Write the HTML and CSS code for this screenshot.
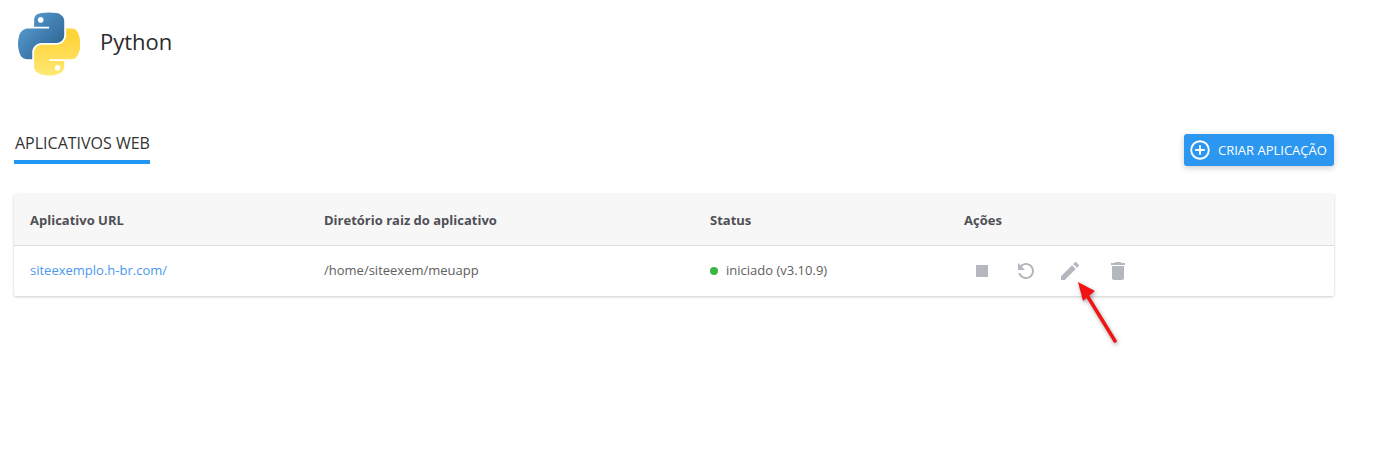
FILE: index.html
```html
<!DOCTYPE html>
<html lang="pt">
<head>
<meta charset="utf-8">
<title>Python</title>
<link rel="stylesheet" href="styles.css">
</head>
<body>
<main class="page">
  <header class="app-head">
    <svg class="logo" viewBox="0 0 110.4 112.2" aria-hidden="true">
      <defs>
        <linearGradient id="pyBlue" x1="0.1" y1="0.05" x2="0.85" y2="0.75">
          <stop offset="0" stop-color="#5a9fd4"/>
          <stop offset="1" stop-color="#306998"/>
        </linearGradient>
        <linearGradient id="pyYellow" x1="0.5" y1="0.2" x2="0.5" y2="1">
          <stop offset="0" stop-color="#ffd43b"/>
          <stop offset="1" stop-color="#ffe873"/>
        </linearGradient>
      </defs>
      <path fill="url(#pyBlue)" d="M54.92 0C50.34.02 45.96.41 42.11 1.09 30.76 3.1 28.7 7.29 28.7 15.03v10.22h26.81v3.41H18.64C10.85 28.66 4.02 33.34 1.89 42.25c-2.46 10.21-2.57 16.59 0 27.25 1.91 7.94 6.46 13.59 14.25 13.59h9.22V70.84c0-8.85 7.66-16.66 16.75-16.66h26.78c7.45 0 13.4-6.14 13.4-13.62V15.03c0-7.27-6.13-12.72-13.4-13.94C64.28.33 59.5-.02 54.92 0zM40.42 8.22c2.77 0 5.03 2.3 5.03 5.12 0 2.82-2.26 5.1-5.03 5.1-2.78 0-5.03-2.28-5.03-5.1 0-2.82 2.25-5.12 5.03-5.12z"/>
      <path fill="url(#pyYellow)" d="M85.64 28.66v11.9c0 9.23-7.83 17-16.75 17H42.11c-7.34 0-13.41 6.28-13.41 13.63v25.53c0 7.27 6.32 11.54 13.41 13.62 8.49 2.5 16.63 2.95 26.78 0 6.75-1.95 13.4-5.89 13.4-13.62V86.5H55.51v-3.41h40.13c7.79 0 10.7-5.44 13.41-13.59 2.8-8.4 2.68-16.47 0-27.25-1.93-7.76-5.6-13.59-13.41-13.59zM70.58 93.31c2.78 0 5.03 2.28 5.03 5.1 0 2.82-2.25 5.12-5.03 5.12-2.77 0-5.03-2.3-5.03-5.12 0-2.82 2.26-5.1 5.03-5.1z"/>
    </svg>
    <h1 class="app-title">Python</h1>
  </header>

  <section class="toolbar">
    <h2 class="tab">APLICATIVOS WEB</h2>
    <button class="create-btn" type="button">
      <svg class="create-icon" viewBox="0 0 20 20" aria-hidden="true">
        <circle cx="10" cy="10" r="8.8"/>
        <path d="M10 5.2v9.6M5.2 10h9.6"/>
      </svg>
      CRIAR APLICAÇÃO
    </button>
  </section>

  <section class="card">
    <div class="row row-head">
      <div>Aplicativo URL</div>
      <div>Diretório raiz do aplicativo</div>
      <div>Status</div>
      <div>Ações</div>
    </div>
    <div class="row row-body">
      <div class="cell-text"><a class="app-link" href="#">siteexemplo.h-br.com/</a></div>
      <div class="cell-text">/home/siteexem/meuapp</div>
      <div class="status cell-text"><span class="dot"></span>iniciado (v3.10.9)</div>
      <div class="actions">
        <svg class="act" viewBox="0 0 24 24" aria-hidden="true"><path d="M6 6h12v12H6z"/></svg>
        <svg class="act" viewBox="0 0 24 24" aria-hidden="true"><path transform="matrix(-1 0 0 1 24 0)" d="M17.65 6.35C16.2 4.9 14.21 4 12 4c-4.42 0-7.99 3.58-7.99 8s3.57 8 7.99 8c3.73 0 6.84-2.55 7.73-6h-2.08c-.82 2.33-3.04 4-5.65 4-3.31 0-6-2.69-6-6s2.69-6 6-6c1.66 0 3.14.69 4.22 1.78L13 11h7V4l-2.35 2.35z"/></svg>
        <svg class="act" viewBox="0 0 24 24" aria-hidden="true"><path d="M3 17.25V21h3.75L17.81 9.94l-3.75-3.75L3 17.25zM20.71 7.04c.39-.39.39-1.02 0-1.41l-2.34-2.34c-.39-.39-1.02-.39-1.41 0l-1.83 1.83 3.75 3.75 1.83-1.83z"/></svg>
        <svg class="act act-last" viewBox="0 0 24 24" aria-hidden="true"><path d="M6 19c0 1.1.9 2 2 2h8c1.1 0 2-.9 2-2V7H6v12zM19 4h-3.5l-1-1h-5l-1 1H5v2h14V4z"/></svg>
      </div>
    </div>
  </section>

  <svg class="arrow" viewBox="0 0 50 70" aria-hidden="true">
    <path class="arrow-shaft" d="M41 62 14 18"/>
    <path class="arrow-head" d="M4 3 21 12 9 22z"/>
  </svg>
</main>
</body>
</html>
```
FILE: styles.css
```css
* { box-sizing: border-box; }
html, body { margin: 0; height: 100%; background: #fff; }
body {
  font-family: "Open Sans", "Noto Sans", sans-serif;
  font-size: 13px;
  color: #555;
  overflow: hidden;
}
.page {
  position: relative;
  height: 451px;
  padding: 12px 41px 0 14px;
}
.app-head {
  display: flex;
  align-items: center;
  height: 64px;
  padding-left: 4px;
  gap: 20px;
}
.logo { width: 62px; height: 64px; flex: none; }
.app-title {
  margin: -6px 0 0;
  font-size: 22px;
  font-weight: 400;
  color: #2b2b2b;
}
.toolbar {
  display: flex;
  justify-content: space-between;
  align-items: flex-start;
  margin-top: 58px;
  height: 60px;
}
.tab {
  margin: 0;
  height: 30px;
  width: 136px;
  padding-left: 1px;
  border-bottom: 4px solid #2196f3;
  font-size: 16px;
  font-weight: 400;
  line-height: 19px;
  color: #333;
  white-space: nowrap;
}
.create-btn {
  display: flex;
  align-items: center;
  gap: 8px;
  width: 150px;
  height: 32px;
  padding: 0 0 0 6px;
  border: 0;
  border-radius: 3px;
  background: #2b97f0;
  color: #fff;
  font: 500 13px "Open Sans", sans-serif;
  white-space: nowrap;
  box-shadow: 0 2px 6px rgba(0, 0, 0, .2);
}
.create-icon {
  width: 20px;
  height: 20px;
  flex: none;
  fill: none;
  stroke: #fff;
  stroke-width: 1.9;
}
.card {
  background: #fff;
  border-radius: 2px;
  box-shadow: 0 1px 3px rgba(0, 0, 0, .2);
}
.row {
  display: grid;
  grid-template-columns: 294px 386px 254px 1fr;
  padding-left: 16px;
  align-items: center;
}
.row-head {
  height: 52px;
  background: #f7f7f7;
  border-bottom: 1px solid #ddd;
  font-weight: 700;
  color: #4f4f55;
}
.row-body { height: 50px; color: #606060; }
.cell-text { padding-bottom: 2px; }
.app-link { color: #4a98ec; text-decoration: none; }
.status { display: flex; align-items: center; }
.dot {
  width: 8px;
  height: 8px;
  margin-top: 2px;
  margin-right: 8px;
  border-radius: 50%;
  background: #3cb543;
}
.actions { display: flex; padding-left: 6px; gap: 20px; }
.act { width: 24px; height: 24px; fill: #b4b7bd; flex: none; }
.act-last { margin-left: 4px; }
.arrow {
  position: absolute;
  left: 1074px;
  top: 279px;
  width: 50px;
  height: 70px;
  filter: drop-shadow(1px 2px 2px rgba(0, 0, 0, .35));
}
.arrow-shaft { stroke: #f01414; stroke-width: 3.5; fill: none; stroke-linecap: round; }
.arrow-head { fill: #f01414; }
```
